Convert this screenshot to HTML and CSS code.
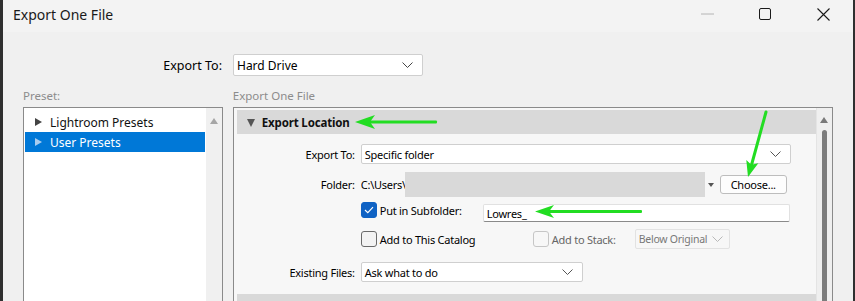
FILE: index.html
```html
<!DOCTYPE html>
<html>
<head>
<meta charset="utf-8">
<title>Export One File</title>
<link rel="stylesheet" href="styles.css">
</head>
<body>
<div class="screen">
  <div class="win">
    <div class="titlebar">
      <span class="title">Export One File</span>
      <div class="controls">
        <span class="ctl"><svg width="14" height="2" viewBox="0 0 14 2"><line x1="0" y1="1" x2="13" y2="1" stroke="#b4b4b4" stroke-width="1"/></svg></span>
        <span class="ctl"><svg width="12" height="12" viewBox="0 0 12 12"><rect x="0.5" y="0.5" width="11" height="11" rx="1.5" fill="none" stroke="#1a1a1a" stroke-width="1"/></svg></span>
        <span class="ctl"><svg width="13" height="13" viewBox="0 0 13 13"><path d="M0.5 0.5 L12.5 12.5 M12.5 0.5 L0.5 12.5" stroke="#1a1a1a" stroke-width="1.1" fill="none"/></svg></span>
      </div>
    </div>
    <div class="body">
      <div class="toprow">
        <div class="toplabel">Export To:</div>
        <div class="select top-select"><span>Hard Drive</span><svg class="chev" width="11" height="6" viewBox="0 0 11 6"><path d="M0.5 0.5 L5.5 5.5 L10.5 0.5" fill="none" stroke="#444" stroke-width="1"/></svg></div>
      </div>
      <div class="main">
        <div class="col left-col">
          <div class="caption">Preset:</div>
          <div class="listbox">
            <div class="list">
              <div class="item"><span class="tri"></span>Lightroom Presets</div>
              <div class="item sel"><span class="tri"></span>User Presets</div>
            </div>
            <div class="lscroll"><span class="uparrow light"></span></div>
          </div>
        </div>
        <div class="col right-col">
          <div class="caption">Export One File</div>
          <div class="panel">
            <div class="content">
              <div class="section-head"><span class="dtri"></span><span class="sec-title">Export Location</span></div>
              <div class="form">
                <div class="row r1">
                  <div class="lbl">Export To:</div>
                  <div class="select wide"><span>Specific folder</span><svg class="chev" width="11" height="6" viewBox="0 0 11 6"><path d="M0.5 0.5 L5.5 5.5 L10.5 0.5" fill="none" stroke="#555" stroke-width="1"/></svg></div>
                </div>
                <div class="row r2">
                  <div class="lbl">Folder:</div>
                  <div class="folder">
                    <span class="path">C:\Users\</span>
                    <span class="blur"></span>
                    <span class="smalltri"></span>
                    <span class="btn">Choose...</span>
                  </div>
                </div>
                <div class="row r3">
                  <div class="lbl"></div>
                  <div class="fields">
                    <label class="check-wrap w1"><span class="cb on"><svg width="10" height="8" viewBox="0 0 10 8"><path d="M1 4 L3.8 6.6 L9 1.2" fill="none" stroke="#fff" stroke-width="1.2"/></svg></span><span>Put in Subfolder:</span></label>
                    <div class="textbox">Lowres_</div>
                  </div>
                </div>
                <div class="row r4">
                  <div class="lbl"></div>
                  <div class="fields center">
                    <label class="check-wrap w2"><span class="cb"></span><span>Add to This Catalog</span></label>
                    <label class="check-wrap w3 disabled"><span class="cb dis"></span><span>Add to Stack:</span></label>
                    <div class="select small dis"><span>Below Original</span><svg class="chev" width="11" height="6" viewBox="0 0 11 6"><path d="M0.5 0.5 L5.5 5.5 L10.5 0.5" fill="none" stroke="#b8b8b8" stroke-width="1"/></svg></div>
                  </div>
                </div>
                <div class="row r5">
                  <div class="lbl">Existing Files:</div>
                  <div class="select mid"><span>Ask what to do</span><svg class="chev" width="11" height="6" viewBox="0 0 11 6"><path d="M0.5 0.5 L5.5 5.5 L10.5 0.5" fill="none" stroke="#555" stroke-width="1"/></svg></div>
                </div>
              </div>
              <div class="section-head next"></div>
            </div>
            <div class="pscroll"><span class="uparrow"></span><span class="thumb"></span></div>
          </div>
        </div>
      </div>
    </div>
  </div>
  <svg class="arrows" width="855" height="301" viewBox="0 0 855 301">
    <g fill="#22dd22" stroke="none">
      <rect x="368" y="120.5" width="69" height="3" rx="1"/>
      <polygon points="355,122 375,115 370,122 375,129"/>
      <rect x="548" y="210" width="94" height="3" rx="1"/>
      <polygon points="535,211.5 554,205 549,211.5 554,218"/>
      <polygon points="748,177 746.3,160 751.3,164.8 758.3,163.2"/>
    </g>
    <line x1="766" y1="112" x2="751.5" y2="165" stroke="#22dd22" stroke-width="3" stroke-linecap="round"/>
  </svg>
</div>
</body>
</html>
```
FILE: styles.css
```css
* { box-sizing: border-box; }
html, body { margin: 0; padding: 0; }
body {
  font-family: "Noto Sans", "Open Sans", "DejaVu Sans", sans-serif;
  color: #000;
  background: #2b2b2b;
  white-space: nowrap;
}
.screen {
  position: relative;
  width: 855px;
  height: 301px;
  overflow: hidden;
  background: #2f2f2f;
  display: flex;
}
.win {
  margin-left: 3px;
  width: 850px;
  height: 301px;
  background: #f0f0f0;
  display: flex;
  flex-direction: column;
  overflow: hidden;
}
.titlebar {
  height: 32px;
  flex-shrink: 0;
  background: #f3f3f3;
  display: flex;
  align-items: center;
  padding-left: 10px;
}
.title {
  font-size: 14px;
  color: #1a1a1a;
  margin-top: -3px;
}
.controls {
  margin-left: auto;
  display: flex;
  height: 100%;
}
.ctl {
  width: 58px;
  height: 100%;
  display: flex;
  align-items: center;
  justify-content: center;
  padding-bottom: 4px;
}
.ctl:nth-child(2) { padding-right: 3px; }
.ctl:nth-child(3) { padding-right: 2px; }
.body {
  padding: 0 20px;
  flex: 1;
  min-height: 0;
  display: flex;
  flex-direction: column;
}
.toprow {
  margin-top: 22px;
  height: 22px;
  flex-shrink: 0;
  display: flex;
  align-items: center;
}
.toplabel {
  width: 200px;
  text-align: right;
  font-size: 12.5px;
  padding-right: 1px;
}
.select {
  background: #fff;
  border: 1px solid #cfcfcf;
  border-radius: 2px;
  display: flex;
  align-items: center;
  justify-content: space-between;
  padding: 0 9px 0 3px;
  flex-shrink: 0;
}
.top-select {
  margin-left: 10px;
  width: 190px;
  height: 22px;
  font-size: 12px;
}
.main {
  margin-top: 10px;
  display: flex;
  gap: 10px;
  flex-shrink: 0;
}
.col { display: flex; flex-direction: column; }
.left-col { width: 200px; }
.right-col { width: 601px; }
.caption {
  height: 21px;
  font-size: 11.5px;
  color: #8c8c8c;
  padding-top: 2px;
  flex-shrink: 0;
}
.listbox {
  height: 200px;
  flex-shrink: 0;
  border: 1px solid #8a8a8a;
  display: flex;
  background: #fff;
}
.list {
  width: 182px;
  padding: 4px 1px 0;
}
.item {
  height: 20px;
  display: flex;
  align-items: center;
  padding-left: 10px;
  font-size: 12px;
  color: #111;
}
.item.sel {
  background: #0078d7;
  color: #fff;
}
.tri {
  width: 0;
  height: 0;
  border-top: 4px solid transparent;
  border-bottom: 4px solid transparent;
  border-left: 7px solid #444;
  margin-right: 8px;
}
.item.sel .tri { border-left-color: #a9cdef; }
.lscroll {
  flex: 1;
  background: #f0f0f0;
  display: flex;
  justify-content: center;
  padding-top: 10px;
}
.uparrow {
  width: 0;
  height: 0;
  flex-shrink: 0;
  border-left: 4.5px solid transparent;
  border-right: 4.5px solid transparent;
  border-bottom: 6px solid #7a7a7a;
}
.uparrow.light { border-bottom-color: #a6a6a6; }
.panel {
  height: 200px;
  flex-shrink: 0;
  border: 1px solid #8a8a8a;
  display: flex;
  background: #f7f7f7;
}
.content {
  width: 582px;
  padding: 2px 0 0 3px;
  display: flex;
  flex-direction: column;
}
.section-head {
  height: 24px;
  background: #d9d9d9;
  display: flex;
  align-items: center;
  padding-left: 10px;
  flex-shrink: 0;
}
.dtri {
  width: 0;
  height: 0;
  border-left: 4.5px solid transparent;
  border-right: 4.5px solid transparent;
  border-top: 8px solid #555;
  margin-right: 7px;
  margin-top: 1px;
}
.sec-title {
  font-weight: bold;
  font-size: 11.5px;
  letter-spacing: -0.15px;
  color: #111;
}
.section-head.next { margin-top: 12px; }
.form {
  display: flex;
  flex-direction: column;
  font-size: 11px;
  letter-spacing: -0.25px;
  flex-shrink: 0;
}
.row {
  display: flex;
  align-items: center;
  height: 20px;
  flex-shrink: 0;
}
.lbl {
  width: 118px;
  text-align: right;
  margin-right: 6px;
  flex-shrink: 0;
}
.r1 { margin-top: 10px; }
.r2 { margin-top: 8px; height: 25px; }
.r3 { margin-top: 5px; align-items: flex-start; }
.r4 { margin-top: 7px; }
.r5 { margin-top: 13px; }
.wide { width: 430px; height: 20px; }
.mid { width: 222px; height: 20px; }
.small { width: 95px; height: 20px; padding-right: 6px; padding-left: 3px; font-size: 10.5px; }
.select.dis {
  background: #f7f7f7;
  border-color: #e2e2e2;
  color: #777;
}
.folder {
  display: flex;
  align-items: center;
  height: 25px;
}
.path { width: 44px; overflow: hidden; flex-shrink: 0; }
.blur {
  width: 300px;
  height: 25px;
  background: #d9d9d9;
  flex-shrink: 0;
}
.smalltri {
  width: 0;
  height: 0;
  border-left: 3px solid transparent;
  border-right: 3px solid transparent;
  border-top: 4px solid #555;
  margin-left: 3px;
  margin-right: 6px;
}
.btn {
  width: 67px;
  height: 19px;
  border: 1px solid #bdbdbd;
  border-radius: 3px;
  background: #fdfdfd;
  display: flex;
  align-items: center;
  justify-content: center;
}
.fields {
  display: flex;
  align-items: flex-start;
}
.fields.center { align-items: center; }
.check-wrap {
  display: flex;
  align-items: center;
  gap: 3px;
  flex-shrink: 0;
}
.w1 { width: 122px; }
.w2 { width: 172px; }
.w3 { width: 102px; color: #666; }
.cb {
  width: 16px;
  height: 16px;
  border: 1px solid #6a6a6a;
  border-radius: 3px;
  background: #f3f3f3;
  display: flex;
  align-items: center;
  justify-content: center;
  flex-shrink: 0;
}
.cb.on {
  background: #0f62c4;
  border-color: #0f62c4;
}
.cb.dis {
  border-color: #c6c6c6;
  background: #f7f7f7;
}
.textbox {
  margin-top: 2px;
  width: 307px;
  height: 18px;
  background: #fff;
  border: 1px solid #e1e1e1;
  border-bottom-color: #8a8a8a;
  border-radius: 2px;
  padding-left: 3px;
  display: flex;
  align-items: center;
}
.pscroll {
  flex: 1;
  background: #efefef;
  border-left: 1px solid #e4e4e4;
  display: flex;
  flex-direction: column;
  align-items: center;
  padding-top: 9px;
}
.thumb {
  margin-top: 7px;
  width: 5px;
  flex: 1;
  background: #7c7c7c;
  border-radius: 3px 3px 0 0;
}
.arrows {
  position: absolute;
  left: 0;
  top: 0;
  pointer-events: none;
}
```
